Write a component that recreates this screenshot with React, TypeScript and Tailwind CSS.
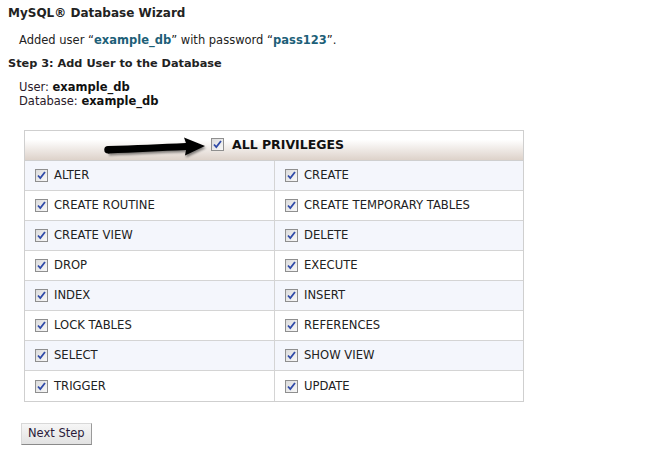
import React from 'react'

const privileges: [string, string][] = [
  ['ALTER', 'CREATE'],
  ['CREATE ROUTINE', 'CREATE TEMPORARY TABLES'],
  ['CREATE VIEW', 'DELETE'],
  ['DROP', 'EXECUTE'],
  ['INDEX', 'INSERT'],
  ['LOCK TABLES', 'REFERENCES'],
  ['SELECT', 'SHOW VIEW'],
  ['TRIGGER', 'UPDATE'],
]

function Check() {
  return (
    <span className="inline-flex w-[13px] h-[13px] border border-[#8f8f8f] bg-gradient-to-br from-[#dcdcdc] to-[#f8f8f8] items-center justify-center shrink-0">
      <svg width="9" height="9" viewBox="0 0 9 9">
        <path d="M1 4.5 L3.3 7 L8 1" stroke="#2f4aa8" strokeWidth="1.8" fill="none" />
      </svg>
    </span>
  )
}

// hand-drawn style pointer arrow
const arrowPath =
  'M4 10 C 30 9.5, 58 8, 82 7 L80 1.5 L101 10 L81 19.5 L82 14 C 58 15, 30 16.5, 4 17.5 Z'

function Arrow() {
  return (
    <svg width="104" height="24" viewBox="0 0 104 24" className="shrink-0">
      <defs>
        <filter id="sh" x="-10%" y="-50%" width="120%" height="200%">
          <feGaussianBlur stdDeviation="1.3" />
        </filter>
      </defs>
      <g filter="url(#sh)" opacity="0.45" transform="translate(1,2)">
        <path d={arrowPath} fill="#000" />
      </g>
      <path d={arrowPath} fill="#000" />
      <circle cx="4" cy="13.75" r="3.75" fill="#000" />
    </svg>
  )
}

export default function App() {
  return (
    <div className="w-[650px] h-[457px] bg-white text-[#222] font-['DejaVu_Sans',Verdana,sans-serif] text-[11.5px] relative overflow-hidden">
      <div className="pt-[5px] pl-[8px]">
        <h1 className="text-[12px] font-bold leading-[16px]">MySQL® Database Wizard</h1>
        <p className="mt-[12px] ml-[11px] leading-[15px]">
          Added user “<b className="text-[#1d5f78]">example_db</b>” with password “<b className="text-[#1d5f78]">pass123</b>”.
        </p>
        <h2 className="mt-[8px] text-[11.3px] font-bold leading-[15px]">Step 3: Add User to the Database</h2>
        <div className="mt-[9px] ml-[11px] leading-[14px] text-[#2a1a2a]">
          <div>User: <b className="text-[#111]">example_db</b></div>
          <div>Database: <b className="text-[#111]">example_db</b></div>
        </div>
      </div>

      <div className="mt-[22px] ml-[24px] w-[500px] border border-[#cfcfcf]">
        <div className="h-[30px] flex items-center pl-[79px] bg-gradient-to-b from-white from-30% to-[#ddd2ca] border-b border-[#cfcfcf]">
          <span className="mt-[4px]"><Arrow /></span>
          <span className="ml-[3px]"><Check /></span>
          <span className="ml-[8px] font-bold text-[12.5px] text-[#111]">ALL PRIVILEGES</span>
        </div>
        {privileges.map(([a, b], i) => (
          <div key={a} className={`flex h-[30px] text-[11.6px] text-[#222] ${i % 2 === 0 ? 'bg-[#f4f6fc]' : 'bg-white'} ${i < privileges.length - 1 ? 'border-b border-[#d4d4d4]' : ''}`}>
            <div className="w-[250px] flex items-center pl-[10px] gap-[6px] border-r border-[#d4d4d4]">
              <Check />
              <span className="pt-[1px]">{a}</span>
            </div>
            <div className="flex-1 flex items-center pl-[10px] gap-[6px]">
              <Check />
              <span className="pt-[1px]">{b}</span>
            </div>
          </div>
        ))}
      </div>

      <button className="mt-[21px] ml-[21px] h-[22px] px-[6px] text-[11.5px] text-[#2a1a3a] bg-gradient-to-b from-[#f6f6f6] to-[#e2e2e2] border border-[#d8d8d8] border-r-[#9a9a9a] border-b-[#8a8a8a]">
        Next Step
      </button>
    </div>
  )
}
